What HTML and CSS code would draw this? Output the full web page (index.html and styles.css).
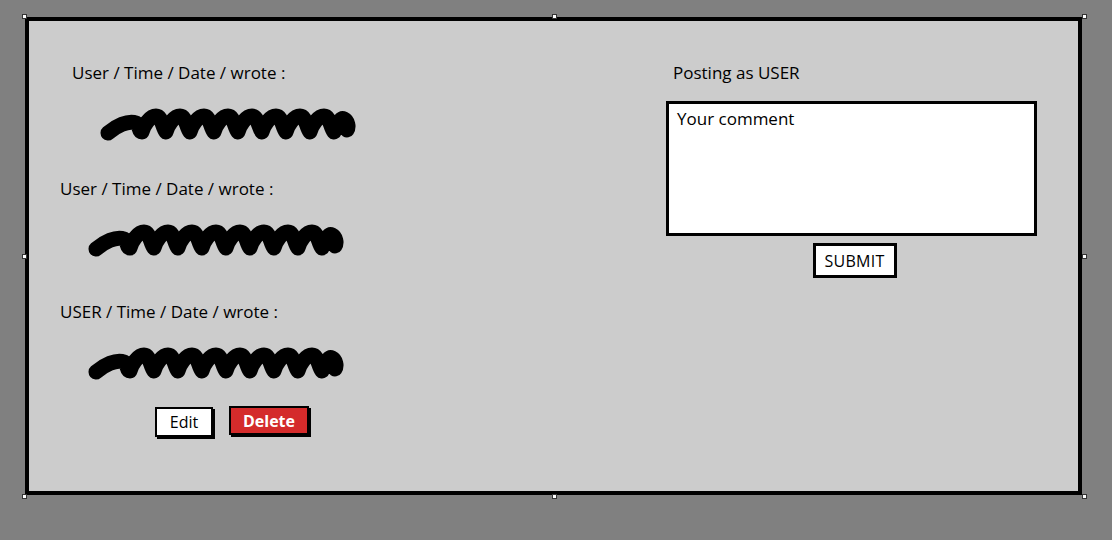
FILE: index.html
```html
<!DOCTYPE html>
<html>
<head>
<meta charset="utf-8">
<link rel="stylesheet" href="styles.css">
</head>
<body>
<div class="stage">
  <div class="panel">
    <div class="comments">
      <div class="comment first">
        <div class="label">User / Time / Date / wrote :</div>
        <svg class="scribble" width="257" height="36" viewBox="0 0 257 36"><path d="M8 28 C16 21 28 15 36 18 C40 20 38 27 42 27 C44 20 50 11 56 11 C62 11 62 22 66 27 C68 20 74 11 80 11 C86 11 86 22 90 27 C92 20 98 11 104 11 C110 11 110 22 114 27 C116 20 122 11 128 11 C134 11 134 22 138 27 C140 20 146 11 152 11 C158 11 158 22 162 27 C164 20 170 11 176 11 C182 11 182 22 186 27 C188 20 194 11 200 11 C206 11 206 22 210 27 C212 20 218 11 224 11 C230 11 230 22 234 27 C238 20 240 12 244 14 C248 16 249 22 247 25" /></svg>
      </div>
      <div class="comment second">
        <div class="label">User / Time / Date / wrote :</div>
        <svg class="scribble" width="257" height="36" viewBox="0 0 257 36"><path d="M8 28 C16 21 28 15 36 18 C40 20 38 27 42 27 C44 20 50 11 56 11 C62 11 62 22 66 27 C68 20 74 11 80 11 C86 11 86 22 90 27 C92 20 98 11 104 11 C110 11 110 22 114 27 C116 20 122 11 128 11 C134 11 134 22 138 27 C140 20 146 11 152 11 C158 11 158 22 162 27 C164 20 170 11 176 11 C182 11 182 22 186 27 C188 20 194 11 200 11 C206 11 206 22 210 27 C212 20 218 11 224 11 C230 11 230 22 234 27 C238 20 240 12 244 14 C248 16 249 22 247 25" /></svg>
      </div>
      <div class="comment third">
        <div class="label">USER / Time / Date / wrote :</div>
        <svg class="scribble" width="257" height="36" viewBox="0 0 257 36"><path d="M8 28 C16 21 28 15 36 18 C40 20 38 27 42 27 C44 20 50 11 56 11 C62 11 62 22 66 27 C68 20 74 11 80 11 C86 11 86 22 90 27 C92 20 98 11 104 11 C110 11 110 22 114 27 C116 20 122 11 128 11 C134 11 134 22 138 27 C140 20 146 11 152 11 C158 11 158 22 162 27 C164 20 170 11 176 11 C182 11 182 22 186 27 C188 20 194 11 200 11 C206 11 206 22 210 27 C212 20 218 11 224 11 C230 11 230 22 234 27 C238 20 240 12 244 14 C248 16 249 22 247 25" /></svg>
        <div class="actions">
          <button class="btn edit">Edit</button>
          <button class="btn delete">Delete</button>
        </div>
      </div>
    </div>
    <div class="compose">
      <div class="label">Posting as USER</div>
      <div class="textbox">Your comment</div>
      <div class="submit-row"><button class="btn submit">SUBMIT</button></div>
    </div>
  </div>
  <span class="handle h-tl"></span>
  <span class="handle h-tc"></span>
  <span class="handle h-tr"></span>
  <span class="handle h-ml"></span>
  <span class="handle h-mr"></span>
  <span class="handle h-bl"></span>
  <span class="handle h-bc"></span>
  <span class="handle h-br"></span>
</div>
</body>
</html>
```

FILE: styles.css
```css
html, body {
  margin: 0;
  padding: 0;
  background: #808080;
  font-family: "Open Sans", "Liberation Sans", sans-serif;
  color: #000;
}
.stage {
  position: relative;
  width: 1112px;
  height: 540px;
  padding: 17px 0 0 25px;
  box-sizing: border-box;
}
.panel {
  width: 1057px;
  height: 478px;
  box-sizing: border-box;
  border: 4px solid #000;
  background: #cccccc;
  display: flex;
  justify-content: space-between;
  padding: 42px 41px 0 31px;
}
.label {
  font-size: 17px;
  line-height: 20px;
  height: 20px;
  white-space: nowrap;
}
.comments {
  display: flex;
  flex-direction: column;
}
.comment {
  display: flex;
  flex-direction: column;
  gap: 22px;
}
.comment.first {
  padding-left: 12px;
}
.comment.second {
  margin-top: 38px;
}
.comment.third {
  margin-top: 45px;
}
.scribble {
  display: block;
  margin-left: 28px;
}
.scribble path {
  fill: none;
  stroke: #000;
  stroke-width: 15;
  stroke-linecap: round;
  stroke-linejoin: round;
}
.actions {
  display: flex;
  gap: 16px;
  margin-left: 95px;
  margin-top: 4px;
}
.btn {
  font-family: "Open Sans", "Liberation Sans", sans-serif;
  font-size: 16px;
  line-height: 20px;
  border: 2px solid #000;
  box-shadow: 2px 2px 0 #000;
  padding: 0;
  margin: 0;
  cursor: pointer;
}
.edit {
  background: #fff;
  color: #000;
  width: 58px;
  height: 30px;
  margin-top: 1px;
}
.delete {
  background: #d42b2b;
  color: #fff;
  font-weight: bold;
  width: 80px;
  height: 29px;
  align-self: flex-start;
}
.compose {
  width: 371px;
  display: flex;
  flex-direction: column;
}
.compose .label {
  padding-left: 7px;
}
.textbox {
  margin-top: 18px;
  height: 135px;
  box-sizing: border-box;
  border: 3px solid #000;
  background: #fff;
  padding: 5px 8px;
  font-size: 17px;
  line-height: 20px;
}
.submit-row {
  display: flex;
  justify-content: center;
  padding-left: 6px;
  margin-top: 7px;
}
.submit {
  background: #fff;
  color: #000;
  border: 3px solid #000;
  box-shadow: none;
  width: 84px;
  height: 35px;
  padding: 0;
  font-size: 16px;
  letter-spacing: 0.3px;
}
.handle {
  position: absolute;
  width: 3px;
  height: 3px;
  background: #fff;
  border: 1px solid #333;
}
.h-tl { left: 22px; top: 14px; }
.h-tc { left: 552px; top: 14px; }
.h-tr { left: 1082px; top: 14px; }
.h-ml { left: 22px; top: 254px; }
.h-mr { left: 1082px; top: 254px; }
.h-bl { left: 22px; top: 494px; }
.h-bc { left: 552px; top: 494px; }
.h-br { left: 1082px; top: 494px; }
```
